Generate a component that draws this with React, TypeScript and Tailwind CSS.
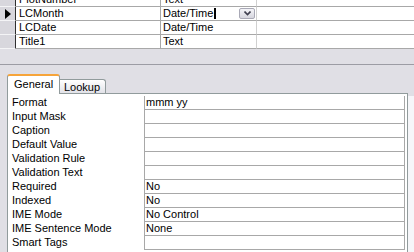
import React from 'react'

const fields = [
  { name: 'PlotNumber', type: 'Text' },
  { name: 'LCMonth', type: 'Date/Time', current: true },
  { name: 'LCDate', type: 'Date/Time' },
  { name: 'Title1', type: 'Text' },
]

const props = [
  ['Format', 'mmm yy'],
  ['Input Mask', ''],
  ['Caption', ''],
  ['Default Value', ''],
  ['Validation Rule', ''],
  ['Validation Text', ''],
  ['Required', 'No'],
  ['Indexed', 'No'],
  ['IME Mode', 'No Control'],
  ['IME Sentence Mode', 'None'],
  ['Smart Tags', ''],
]

function FieldRow({ name, type, current }: { name: string; type: string; current?: boolean }) {
  return (
    <div className="flex h-[14px] leading-[13px]">
      <div className="w-[16px] flex-shrink-0 bg-[#d8d7dd] border-b border-[#f4f4f6] border-r border-r-[#303030] relative">
        {current && (
          <div className="absolute left-[5px] top-[2px] w-0 h-0 border-y-[5px] border-y-transparent border-l-[6px] border-l-black" />
        )}
      </div>
      <div className="w-[144px] flex-shrink-0 border-b border-[#a8a8a8] pl-[3px]">{name}</div>
      <div className="w-[96px] flex-shrink-0 border-b border-l border-[#a8a8a8] pl-[2px] relative">
        {type}
        {current && (
          <>
            <span className="absolute left-[53px] top-[1px] w-[2px] h-[11px] bg-black" />
            <span className="absolute right-[1px] top-[1px] w-[16px] h-[11px] rounded-[2px] border border-[#a9a9b6] bg-gradient-to-b from-[#f4f4f8] to-[#d6d6de] flex items-center justify-center">
              <svg width="7" height="5" viewBox="0 0 7 5">
                <path d="M0.5 0.5 L3.5 3.5 L6.5 0.5" fill="none" stroke="#3f3f4f" strokeWidth="1.6" />
              </svg>
            </span>
          </>
        )}
      </div>
      <div className="flex-1 border-b border-l border-b-[#a8a8a8] border-l-[#d0d0d0]" />
    </div>
  )
}

export default function App() {
  return (
    <div className="w-[414px] h-[252px] overflow-hidden bg-[#e0dfe5] font-['Liberation_Sans',Arial,sans-serif] text-[11px] text-black">
      <div className="bg-white mt-[-7px]">
        {fields.map((f) => (
          <FieldRow key={f.name} {...f} />
        ))}
      </div>

      <div className="h-[16px] border-b border-[#9c9ca4]" />

      <div className="h-[28px] flex items-end pl-[7px]">
        <div className="relative z-10 w-[53px] h-[20px] mb-[-1px] bg-white border-x border-[#919b9c] border-t-2 border-t-[#f6a43a] rounded-t-[3px] pl-[6px] leading-[17px]">
          General
        </div>
        <div className="w-[46px] h-[14px] bg-gradient-to-b from-white to-[#e2e2e8] border-t border-r border-[#919b9c] rounded-tr-[3px] pl-[4px] leading-[14px]">
          Lookup
        </div>
      </div>

      <div className="flex">
        <div className="ml-[7px] w-[401px] h-[200px] bg-white border-x border-t border-[#919b9c] pt-[2px]">
          {props.map(([label, value]) => (
            <div key={label} className="flex h-[14px] leading-[13px]">
              <div className="w-[136px] flex-shrink-0 pl-[4px]">{label}</div>
              <div className="w-[261px] flex-shrink-0 border-l border-r border-b border-[#a8a8a8] pl-[1px]">{value}</div>
            </div>
          ))}
        </div>
        <div className="flex-1 bg-[#f6f6f9] mt-[3px]" />
      </div>
    </div>
  )
}
